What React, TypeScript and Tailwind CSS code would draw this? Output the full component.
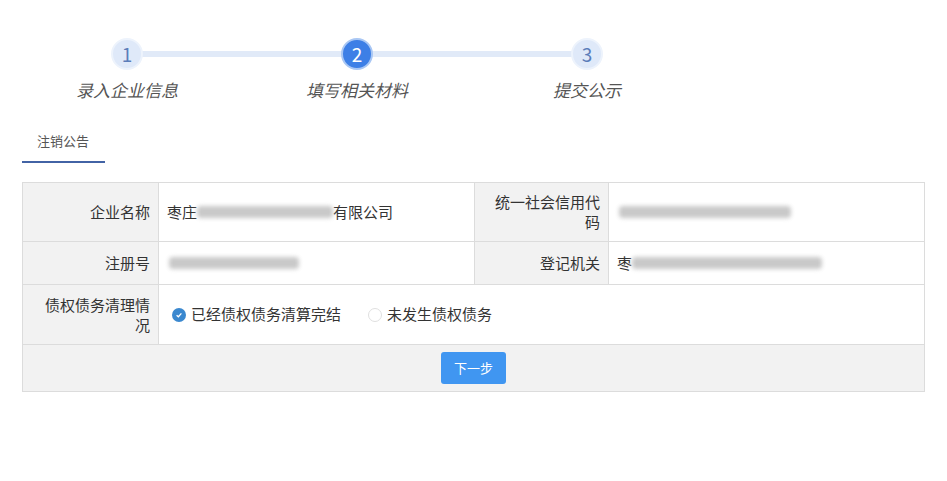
import React from "react";

const steps = [
  { n: 1, label: "录入企业信息", active: false },
  { n: 2, label: "填写相关材料", active: true },
  { n: 3, label: "提交公示", active: false },
];

function Blur({ w, className = "" }: { w: number; className?: string }) {
  return (
    <span
      className={`inline-block h-[12px] align-middle rounded-sm bg-[#c9c9c9] blur-[2px] ${className}`}
      style={{ width: w }}
    />
  );
}

function Stepper() {
  return (
    <div className="relative ml-[12px] flex w-[690px] pt-[38px]">
      <div className="absolute left-[115px] top-[51px] h-[6px] w-[460px] bg-[#e1eaf8]" />
      {steps.map((s) => (
        <div key={s.n} className="relative flex w-[230px] flex-col items-center">
          <div
            className={
              s.active
                ? "flex h-[32px] w-[32px] items-center justify-center rounded-full border-2 border-[#a9c7f4] bg-[#3d7fe6] text-[19px] text-white"
                : "flex h-[32px] w-[32px] items-center justify-center rounded-full border-2 border-[#edf3fc] bg-[#dfe9f9] text-[19px] text-[#5b7dba]"
            }
          >
            {s.n}
          </div>
          <div className="mt-[7px] text-[17px] italic text-[#555]">{s.label}</div>
        </div>
      ))}
    </div>
  );
}

export default function App() {
  return (
    <div
      className="h-[481px] w-[947px] bg-white text-[#333]"
      style={{ fontFamily: '"Microsoft YaHei", "Noto Sans CJK SC", sans-serif' }}
    >
      <Stepper />

      <div className="ml-[22px] mt-[28px] w-[83px] border-b-2 border-[#4263a5] pb-[11px] pl-[15px] text-[13px] text-[#555]">
        注销公告
      </div>

      <div className="ml-[22px] mt-[19px] w-[903px] border border-[#dcdcdc] text-[15px]">
        <div className="grid grid-cols-[136px_316px_134px_1fr]">
          <div className="flex h-[59px] items-center justify-end border-r border-b border-[#dcdcdc] bg-[#f2f2f2] pl-3 pr-2 text-right">
            企业名称
          </div>
          <div className="flex items-center border-r border-b border-[#dcdcdc] pl-[8px]">
            枣庄
            <Blur w={136} />
            有限公司
          </div>
          <div className="flex items-center justify-end border-r border-b border-[#dcdcdc] bg-[#f2f2f2] pl-3 pr-2 text-right leading-[20px]">
            统一社会信用代码
          </div>
          <div className="flex items-center border-b border-[#dcdcdc] pl-[10px]">
            <Blur w={172} />
          </div>

          <div className="flex h-[43px] items-center justify-end border-r border-b border-[#dcdcdc] bg-[#f2f2f2] pl-3 pr-2">
            注册号
          </div>
          <div className="flex items-center border-r border-b border-[#dcdcdc] pl-[10px]">
            <Blur w={130} />
          </div>
          <div className="flex items-center justify-end border-r border-b border-[#dcdcdc] bg-[#f2f2f2] pl-3 pr-2">
            登记机关
          </div>
          <div className="flex items-center border-b border-[#dcdcdc] pl-[8px]">
            枣
            <Blur w={190} />
          </div>
        </div>

        <div className="grid grid-cols-[136px_1fr]">
          <div className="flex h-[60px] items-center justify-end border-r border-b border-[#dcdcdc] bg-[#f2f2f2] pl-3 pr-2 text-right leading-[20px]">
            债权债务清理情况
          </div>
          <div className="flex items-center border-b border-[#dcdcdc] pl-[13px]">
            <span className="flex h-[14px] w-[14px] items-center justify-center rounded-full bg-[#3a88cf]">
              <svg width="8" height="8" viewBox="0 0 10 10">
                <path d="M2 5.2 L4.2 7.2 L8 3" fill="none" stroke="white" strokeWidth="1.6" />
              </svg>
            </span>
            <span className="ml-[5px]">已经债权债务清算完结</span>
            <span className="ml-[27px] h-[14px] w-[14px] rounded-full border border-[#e0e0e0] bg-white" />
            <span className="ml-[5px]">未发生债权债务</span>
          </div>
        </div>

        <div className="flex h-[46px] items-center justify-center bg-[#f2f2f2]">
          <button className="h-[32px] w-[65px] rounded-[3px] bg-[#4096f1] text-[13px] text-white">
            下一步
          </button>
        </div>
      </div>
    </div>
  );
}
